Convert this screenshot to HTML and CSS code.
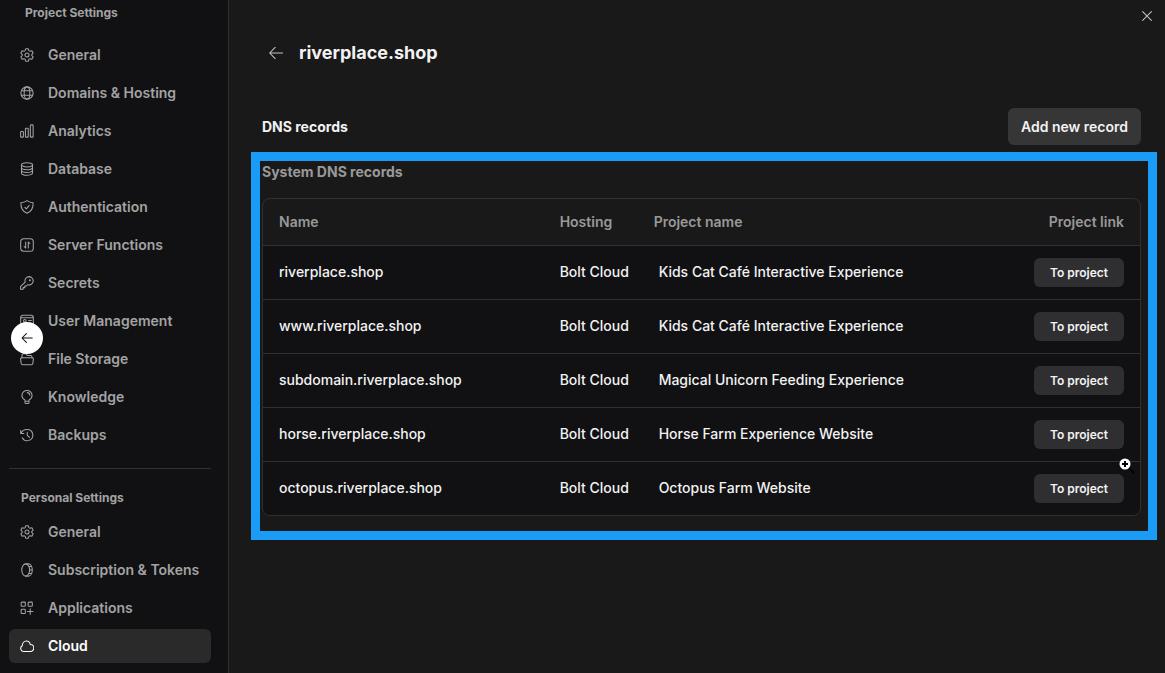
FILE: index.html
```html
<!DOCTYPE html>
<html lang="en">

<head>
    <meta charset="UTF-8">
    <meta name="viewport" content="width=device-width, initial-scale=1.0">
    <title>riverplace.shop - DNS records</title>
    <link rel="stylesheet" href="styles.css">
</head>

<body>
    <div class="layout">
        <aside class="sidebar">
            <h2 class="nav_title project_title">Project Settings</h2>
            <nav class="nav" aria-label="Project Settings">
                <a href="#" class="nav_item">
                    <svg class="icon" viewBox="0 0 16 16"><path d="M6.500.9h3l.6 2.100 1.300.8 2.200-.6 1.400 2.600-1.500 1.500v1.400l1.500 1.500-1.400 2.600-2.200-.6-1.300.8-.6 2.100h-3l-.6-2.100-1.300-.8-2.200.6L1 10.200l1.500-1.500V7.300L1 5.800l1.400-2.600 2.200.6 1.300-.8z"/><circle cx="8" cy="8" r="2.300"/></svg>
                    General
                </a>
                <a href="#" class="nav_item">
                    <svg class="icon" viewBox="0 0 16 16"><circle cx="8" cy="8" r="7"/><ellipse cx="8" cy="8" rx="3.300" ry="7"/><path d="M1.700 5.500h12.600M1.700 10.500h12.600"/></svg>
                    Domains &amp; Hosting
                </a>
                <a href="#" class="nav_item">
                    <svg class="icon" viewBox="0 0 16 16"><rect x=".7" y="8.500" width="3.200" height="6.500" rx=".8"/><rect x="6.200" y="4.800" width="3.200" height="10.200" rx=".8"/><rect x="11.800" y="1" width="3.200" height="14" rx=".8"/></svg>
                    Analytics
                </a>
                <a href="#" class="nav_item">
                    <svg class="icon" viewBox="0 0 16 16"><ellipse cx="8" cy="3.200" rx="6.300" ry="2.400"/><path d="M1.700 3.200v9.400C1.700 14 4.500 15.200 8 15.200s6.300-1.200 6.300-2.600V3.200M1.700 6.400C1.700 7.800 4.500 8.900 8 8.900s6.300-1.100 6.300-2.500M1.700 9.500C1.700 10.900 4.500 12 8 12s6.300-1.100 6.300-2.500"/></svg>
                    Database
                </a>
                <a href="#" class="nav_item">
                    <svg class="icon" viewBox="0 0 16 16"><path d="M8 .8c2 1.500 4.300 2.300 7 2.400.2 5.900-1.800 9.900-7 12-5.200-2.100-7.200-6.100-7-12C3.700 3.100 6 2.300 8 .8z"/><path d="M5.600 8.400l1.700 1.700 3.200-4"/></svg>
                    Authentication
                </a>
                <a href="#" class="nav_item">
                    <svg class="icon" viewBox="0 0 16 16"><rect x=".8" y=".8" width="14.400" height="14.400" rx="3.500"/><path d="M6.500 4.500v7L4.800 9.700M9.500 11.500v-7l1.700 1.800"/></svg>
                    Server Functions
                </a>
                <a href="#" class="nav_item">
                    <svg class="icon" viewBox="0 0 16 16"><path d="M10.500.7a4.800 4.800 0 0 0-4.600 6.200L.9 11.900c-.3.3-.4.700-.4 1v2.300h3.100v-1.900h1.900v-1.900h1.900l1.200-1.400a4.800 4.800 0 1 0 1.900-9.300z"/><circle cx="11.300" cy="4.800" r=".5"/></svg>
                    Secrets
                </a>
                <a href="#" class="nav_item">
                    <svg class="icon" viewBox="0 0 16 16"><rect x=".8" y="1.500" width="14.400" height="13" rx="2.500"/><path d="M.8 4.300h14.400M9.800 7.500H13M9.800 10.500H13"/><circle cx="5.500" cy="7.800" r="1.500"/><path d="M2.800 12.500c.4-3 5-3 5.400 0"/></svg>
                    User Management
                </a>
                <a href="#" class="nav_item">
                    <svg class="icon" viewBox="0 0 16 16"><path d="M2.300 6.500V3.500c0-1 .6-1.600 1.600-1.600h2.700L8.400 4h3.700c1 0 1.600.6 1.600 1.600v.9"/><path d="M2 6.500h12c.8 0 1.400.6 1.300 1.400l-.6 5c-.1 1-.8 1.700-1.900 1.700H3.200c-1.100 0-1.800-.7-1.900-1.700l-.6-5C.6 7.100 1.200 6.500 2 6.500z"/></svg>
                    File Storage
                </a>
                <a href="#" class="nav_item">
                    <svg class="icon" viewBox="0 0 16 16"><path d="M5.700 11.300C3.500 10.300 2.200 8.500 2.200 6.300a5.800 5.800 0 0 1 11.600 0c0 2.200-1.300 4-3.500 5v1.500H5.700zM5.700 12.800v1.400c0 .7.500 1.200 1.200 1.200h2.200c.7 0 1.200-.5 1.200-1.200v-1.400M8.300 3c1.700.1 2.800 1.200 2.900 2.900"/></svg>
                    Knowledge
                </a>
                <a href="#" class="nav_item">
                    <svg class="icon" viewBox="0 0 16 16"><path d="M.8 2.800v3.500h3.600M1.200 6C2.400 3.200 5 1.700 8.200 1.700a6.400 6.400 0 1 1-5.600 9.500M8.300 4.900v3.500l2.500 2.400"/></svg>
                    Backups
                </a>
            </nav>

            <hr class="divider">

            <h2 class="nav_title">Personal Settings</h2>
            <nav class="nav" aria-label="Personal Settings">
                <a href="#" class="nav_item">
                    <svg class="icon" viewBox="0 0 16 16"><path d="M6.500.9h3l.6 2.100 1.300.8 2.200-.6 1.400 2.600-1.500 1.500v1.400l1.500 1.500-1.400 2.600-2.200-.6-1.300.8-.6 2.100h-3l-.6-2.100-1.300-.8-2.200.6L1 10.200l1.500-1.500V7.300L1 5.800l1.400-2.600 2.200.6 1.300-.8z"/><circle cx="8" cy="8" r="2.300"/></svg>
                    General
                </a>
                <a href="#" class="nav_item">
                    <svg class="icon" viewBox="0 0 16 16"><ellipse cx="6.500" cy="8" rx="4.500" ry="7"/><path d="M6.500 1h3.200c2.500 0 4.300 3.100 4.300 7s-1.800 7-4.300 7H6.500M10 4h3M11 8h3M10 12h3"/></svg>
                    Subscription &amp; Tokens
                </a>
                <a href="#" class="nav_item">
                    <svg class="icon" viewBox="0 0 16 16"><rect x="1.300" y="1.300" width="4.800" height="4.800" rx="1"/><rect x="9.300" y="1.300" width="4.800" height="4.800" rx="1"/><rect x="1.300" y="9.500" width="4.800" height="4.800" rx="1"/><path d="M11.700 8.900v6.200M8.600 12h6.200"/></svg>
                    Applications
                </a>
                <a href="#" class="nav_item active" aria-current="page">
                    <svg class="icon" viewBox="0 0 16 16"><path d="M4 14.200A3.500 3.500 0 0 1 2.500 7.700C2.700 4.800 4.700 2.300 7.300 2.300c2.400 0 4 1.800 4.500 4.100a3.900 3.900 0 0 1 .2 7.800z"/></svg>
                    Cloud
                </a>
            </nav>
        </aside>

        <main class="content">
            <button class="icon_btn close_btn" aria-label="Close">
                <svg class="icon" viewBox="0 0 16 16"><path d="M3 3l10 10M13 3L3 13"/></svg>
            </button>

            <header class="page_header">
                <button class="icon_btn" aria-label="Back">
                    <svg class="icon" viewBox="0 0 16 16"><path d="M15.500 8H1M7 1.700L.8 8 7 14.300"/></svg>
                </button>
                <h1>riverplace.shop</h1>
            </header>

            <div class="toolbar">
                <h2>DNS records</h2>
                <button class="btn add_btn">Add new record</button>
            </div>

            <section class="records">
                <h3>System DNS records</h3>
                <div class="table_wrap">
                    <table>
                        <thead>
                            <tr>
                                <th class="col_name">Name</th>
                                <th class="col_hosting">Hosting</th>
                                <th>Project name</th>
                                <th class="col_link">Project link</th>
                            </tr>
                        </thead>
                        <tbody>
                            <tr>
                                <td>riverplace.shop</td>
                                <td>Bolt Cloud</td>
                                <td class="project">Kids Cat Café Interactive Experience</td>
                                <td class="col_link"><button class="btn link_btn">To project</button></td>
                            </tr>
                            <tr>
                                <td>www.riverplace.shop</td>
                                <td>Bolt Cloud</td>
                                <td class="project">Kids Cat Café Interactive Experience</td>
                                <td class="col_link"><button class="btn link_btn">To project</button></td>
                            </tr>
                            <tr>
                                <td>subdomain.riverplace.shop</td>
                                <td>Bolt Cloud</td>
                                <td class="project">Magical Unicorn Feeding Experience</td>
                                <td class="col_link"><button class="btn link_btn">To project</button></td>
                            </tr>
                            <tr>
                                <td>horse.riverplace.shop</td>
                                <td>Bolt Cloud</td>
                                <td class="project">Horse Farm Experience Website</td>
                                <td class="col_link"><button class="btn link_btn">To project</button></td>
                            </tr>
                            <tr>
                                <td>octopus.riverplace.shop</td>
                                <td>Bolt Cloud</td>
                                <td class="project">Octopus Farm Website</td>
                                <td class="col_link"><button class="btn link_btn">To project</button></td>
                            </tr>
                        </tbody>
                    </table>
                </div>
                <svg class="zoom_cursor" viewBox="0 0 16 16" aria-hidden="true">
                    <path d="M9 9l6 6" stroke="#000" stroke-width="2"/>
                    <circle cx="6" cy="6" r="5.500" fill="#fff"/>
                    <path d="M6 3v6M3 6h6" stroke="#000" stroke-width="2"/>
                </svg>
            </section>
        </main>
    </div>

    <button class="float_back" aria-label="Go back">
        <svg class="icon" viewBox="0 0 16 16"><path d="M14 8H2.500M7.300 3L2.300 8l5 5"/></svg>
    </button>
</body>

</html>
```
FILE: styles.css
```css
* {
    margin: 0;
    padding: 0;
    box-sizing: border-box;
    font-family: Inter, "Liberation Sans", sans-serif;
}

body {
    background-color: #191919;
    color: #f2f2f2;
    font-size: 14px;
    line-height: 20px;
}

h1, h2, h3 {
    font-size: 14px;
    font-weight: 700;
}

button {
    border: none;
    background: none;
    color: inherit;
    cursor: pointer;
}

.layout {
    display: flex;
    min-height: 100vh;
}

.icon {
    width: 14px;
    height: 14px;
    flex: none;
    fill: none;
    stroke: currentColor;
    stroke-width: 1.2;
    stroke-linecap: round;
    stroke-linejoin: round;
}

/* sidebar */
.sidebar {
    width: 229px;
    flex: none;
    padding: 3px 17px 10px 9px;
    background-color: #111113;
    border-right: solid 1px #2e2e2e;
}

.nav {
    display: flex;
    flex-direction: column;
    gap: 4px;
}

.nav_title {
    padding-left: 12px;
    margin-bottom: 7px;
    color: #a3a3a3;
    font-size: 12px;
}

.project_title {
    padding-left: 16px;
    margin-bottom: 15px;
}

.nav_item {
    display: flex;
    align-items: center;
    gap: 14px;
    height: 34px;
    padding: 0 11px;
    border-radius: 6px;
    color: #a3a3a3;
    font-weight: 600;
    text-decoration: none;
    white-space: nowrap;
}

.nav_item.active {
    background-color: #2a2a2a;
    color: #fff;
}

.divider {
    margin: 16px 0 19px;
    border: none;
    border-top: solid 1px #323232;
}

/* main content */
.content {
    position: relative;
    flex: 1;
    padding: 39px 24px 24px 33px;
}

.icon_btn {
    display: flex;
    color: #c4c4c4;
}

.close_btn {
    position: absolute;
    top: 9px;
    right: 11px;
}

.page_header {
    display: flex;
    align-items: center;
    gap: 16px;
    padding-left: 7px;
    margin-bottom: 41px;
}

.page_header h1 {
    font-size: 18px;
    line-height: 28px;
}

.toolbar {
    display: flex;
    justify-content: space-between;
    align-items: center;
    margin-bottom: 17px;
}

.btn {
    border-radius: 6px;
    background-color: #2f2f31;
    font-weight: 600;
}

.add_btn {
    padding: 0 13px;
    height: 37px;
    background-color: #363636;
    font-size: 14px;
}

.link_btn {
    padding: 0 16px;
    height: 29px;
    font-size: 12px;
}

/* records table with its highlight frame */
.records {
    position: relative;
}

.records::after {
    content: "";
    position: absolute;
    inset: -10px -16px -24px -11px;
    border: solid 9px #1a9bf5;
    pointer-events: none;
}

.records h3 {
    margin-bottom: 16px;
    color: #999;
}

.table_wrap {
    border: solid 1px #303030;
    border-radius: 8px;
    overflow: hidden;
}

table {
    width: 100%;
    border-collapse: collapse;
}

th {
    height: 46px;
    padding-left: 16px;
    color: #999;
    font-weight: 600;
    text-align: left;
}

td {
    height: 54px;
    padding-left: 16px;
    border-top: solid 1px #303030;
    background-color: #111113;
    font-weight: 500;
}

.col_name {
    width: 32%;
}

.col_hosting {
    width: 94px;
}

.project {
    padding-left: 21px;
}

.col_link {
    padding-right: 16px;
    text-align: right;
}

.zoom_cursor {
    position: absolute;
    right: 6px;
    bottom: 42px;
    width: 16px;
    height: 16px;
    z-index: 1;
}

/* round back button over the sidebar */
.float_back {
    position: fixed;
    top: 322px;
    left: 11px;
    display: flex;
    justify-content: center;
    align-items: center;
    width: 32px;
    height: 32px;
    border-radius: 50%;
    background-color: #fff;
    color: #111;
}
```
